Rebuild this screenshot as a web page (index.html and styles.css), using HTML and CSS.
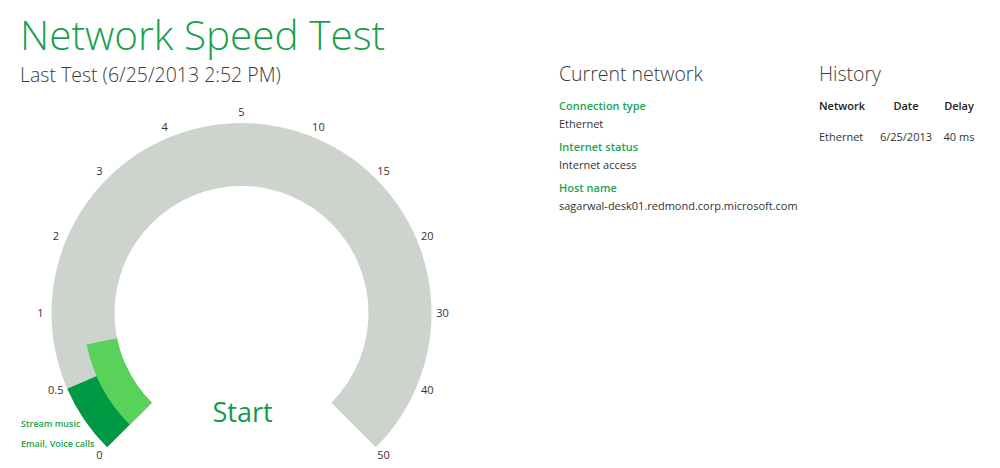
FILE: index.html
```html
<!DOCTYPE html>
<html lang="en">
<head>
  <meta charset="UTF-8" />
  <title>Network Speed Test</title>
  <link rel="stylesheet" href="styles.css">
</head>
<body>

  <div class="page">
    <section class="test-panel">
      <h1>Network Speed Test</h1>
      <p class="last-test">Last Test (6/25/2013 2:52 PM)</p>

      <!-- gauge, viewBox uses page coordinates so the centre sits at 241.5,313 -->
      <svg class="gauge" width="480" height="373" viewBox="20 95 480 373">
        <path class="ring" d="M107.15 447.35 A190 190 0 1 1 375.85 447.35 L331.3 402.8 A127 127 0 1 0 151.7 402.8 Z" />
        <path class="band-email" d="M67.26 388.76 A190 190 0 0 0 107.15 447.35 L151.7 402.8 A127 127 0 0 1 125.03 363.64 Z" />
        <path class="band-music" d="M86.67 344.5 A158 158 0 0 0 129.78 424.72 L151.7 402.8 A127 127 0 0 1 117.05 338.32 Z" />

        <text class="tick" x="99.4" y="459.1">0</text>
        <text class="tick" x="55.8" y="393.9">0.5</text>
        <text class="tick" x="40.5" y="317">1</text>
        <text class="tick" x="55.8" y="240.1">2</text>
        <text class="tick" x="99.4" y="174.9">3</text>
        <text class="tick" x="164.6" y="131.3">4</text>
        <text class="tick" x="241.5" y="116">5</text>
        <text class="tick" x="318.4" y="131.3">10</text>
        <text class="tick" x="383.6" y="174.9">15</text>
        <text class="tick" x="427.2" y="240.1">20</text>
        <text class="tick" x="442.5" y="317">30</text>
        <text class="tick" x="427.2" y="393.9">40</text>
        <text class="tick" x="383.6" y="459.1">50</text>

        <text class="legend" x="21" y="427">Stream music</text>
        <text class="legend" x="21" y="447">Email, Voice calls</text>

        <text class="start" x="242.5" y="422">Start</text>
      </svg>
    </section>

    <section class="current">
      <h2>Current network</h2>
      <dl>
        <dt>Connection type</dt>
        <dd>Ethernet</dd>
        <dt>Internet status</dt>
        <dd>Internet access</dd>
        <dt>Host name</dt>
        <dd>sagarwal-desk01.redmond.corp.microsoft.com</dd>
      </dl>
    </section>

    <section class="history">
      <h2>History</h2>
      <div class="history-table">
        <div class="th">Network</div>
        <div class="th center">Date</div>
        <div class="th center">Delay</div>
        <div>Ethernet</div>
        <div class="center">6/25/2013</div>
        <div class="center">40 ms</div>
      </div>
    </section>
  </div>

</body>
</html>
```

FILE: styles.css
```css
/* Reset and base */
* {
  box-sizing: border-box;
  margin: 0;
  padding: 0;
}
html, body {
  height: 100%;
  background: #fff;
  font-family: "Segoe UI", "Open Sans", sans-serif;
  color: #333;
  overflow: hidden;
}

.page {
  display: flex;
}

/* Left: title and gauge */
.test-panel {
  width: 559px;
  padding-left: 20px;
}
h1 {
  font-size: 40.5px;
  font-weight: 300;
  line-height: 56px;
  padding-top: 7px;
  color: #1a9f4c;
}
.last-test,
h2 {
  font-size: 19.5px;
  font-weight: 300;
  line-height: 24px;
  color: #3a3a3a;
}

.gauge {
  display: block;
  margin-top: 8px;
}
.ring {
  fill: #cdd4ce;
}
.band-email {
  fill: #009a44;
}
.band-music {
  fill: #58d258;
}
.tick {
  font-size: 11px;
  fill: #333;
  text-anchor: middle;
}
.legend {
  font-size: 9px;
  font-weight: 600;
  fill: #1a9f4c;
}
.start {
  font-size: 27px;
  fill: #139a48;
  text-anchor: middle;
}

/* Current network */
.current {
  width: 260px;
  padding-top: 62px;
}
.current dl {
  padding-top: 6px;
}
.current dt,
.current dd {
  font-size: 11px;
  line-height: 18px;
}
.current dt {
  margin-top: 5px;
  font-weight: 600;
  color: #22a34f;
}
.current dd {
  color: #333;
}

/* History */
.history {
  padding-top: 62px;
}
.history-table {
  display: grid;
  grid-template-columns: 55px 64px 42px;
  row-gap: 13px;
  margin-top: 11px;
  font-size: 11px;
  line-height: 18px;
}
.history-table .th {
  font-weight: 600;
  color: #222;
}
.history-table .center {
  text-align: center;
}
```
